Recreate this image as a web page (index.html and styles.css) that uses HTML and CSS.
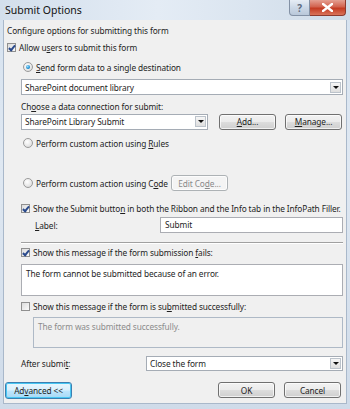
FILE: index.html
```html
<!DOCTYPE html>
<html lang="en">
<head>
  <meta charset="UTF-8">
  <title>Submit Options</title>
  <link rel="stylesheet" href="styles.css">
</head>
<body>
  <div class="window">
    <div class="titlebar">
      <span class="title">Submit Options</span>
      <div class="caption-btns">
        <span class="cap help">?</span>
        <span class="cap close">
          <svg width="11" height="9" viewBox="0 0 11 9"><path d="M1 1 L10 8 M10 1 L1 8" stroke="#fff" stroke-width="2.4" stroke-linecap="square"/></svg>
        </span>
      </div>
    </div>

    <div class="client">
      <div class="row intro"><span>Configure options for submitting this form</span></div>
      <div class="row allow"><span class="cb checked"></span><span>Allow u<u>s</u>ers to submit this form</span></div>

      <div class="indent">
        <div class="row radio-row send"><span class="rb on"></span><span><u>S</u>end form data to a single destination</span></div>
        <div class="select dest"><span class="val">SharePoint document library</span><span class="arrow"></span></div>

        <div class="row choose"><span>Ch<u>o</u>ose a data connection for submit:</span></div>
        <div class="conn">
          <div class="select conn-select"><span class="val">SharePoint Library Submit</span><span class="arrow"></span></div>
          <button class="btn"><u>A</u>dd...</button>
          <button class="btn"><u>M</u>anage...</button>
        </div>

        <div class="row radio-row rules"><span class="rb"></span><span>Perform custom action using <u>R</u>ules</span></div>
        <div class="row radio-row code">
          <span class="rb"></span><span class="code-text">Perform custom action using C<u>o</u>de</span>
          <button class="btn disabled">Edit Co<u>d</u>e...</button>
        </div>

        <div class="row show-btn"><span class="cb checked"></span><span>Show the Submit butto<u>n</u> in both the Ribbon and the Info tab in the InfoPath Filler.</span></div>
        <div class="label-row">
          <span class="lbl"><u>L</u>abel:</span>
          <div class="field">Submit</div>
        </div>

        <div class="separator"></div>

        <div class="row fails"><span class="cb checked"></span><span>Show this message if the form submission <u>f</u>ails:</span></div>
        <div class="textbox">The form cannot be submitted because of an error.</div>

        <div class="row success"><span class="cb"></span><span>Show this message if the form is su<u>b</u>mitted successfully:</span></div>
        <div class="textbox disabled">The form was submitted successfully.</div>

        <div class="after-row">
          <span class="lbl">After submi<u>t</u>:</span>
          <div class="select after-select"><span class="val">Close the form</span><span class="arrow"></span></div>
        </div>
      </div>

      <div class="footer">
        <button class="btn focus">Ad<u>v</u>anced &lt;&lt;</button>
        <div class="footer-right">
          <button class="btn">OK</button>
          <button class="btn">Cancel</button>
        </div>
      </div>
    </div>
  </div>
</body>
</html>
```

FILE: styles.css
```css
body {
  margin: 0;
  font-family: 'Noto Sans', 'Open Sans', sans-serif;
  font-size: 8.3px;
  letter-spacing: -0.1px;
  color: #1e1e1e;
  background: #c9d6e4;
}

.window {
  width: 350px;
  height: 409px;
  background: linear-gradient(to bottom, #d6e2ef 0%, #dfe8f2 40%, #cfdbe9 100%);
  display: flex;
  flex-direction: column;
  box-sizing: border-box;
}

.titlebar {
  height: 20px;
  display: flex;
  justify-content: space-between;
  align-items: flex-start;
  background: linear-gradient(to right, #d3dfec 0%, #e4ecf5 45%, #dbe5f0 70%, #cfdbe8 100%);
}

.title {
  font-size: 10.5px;
  letter-spacing: 0;
  color: #111;
  padding: 3px 0 0 5px;
}

.caption-btns {
  display: flex;
  margin-right: 4px;
}

.cap {
  height: 16px;
  display: flex;
  align-items: center;
  justify-content: center;
  box-sizing: border-box;
  border: 1px solid #8391a5;
  border-top: none;
}

.help {
  width: 21px;
  border-radius: 0 0 0 4px;
  background: linear-gradient(to bottom, #e6edf5 0%, #ccd8e6 50%, #b9c8da 100%);
  color: #5d6b80;
  font-size: 10px;
  font-weight: bold;
}

.close {
  width: 36px;
  border-left: none;
  border-color: #8d3a2e;
  border-radius: 0 0 4px 0;
  background: linear-gradient(to bottom, #e4a092 0%, #d2634f 45%, #c43b22 55%, #d9745b 100%);
}

.client {
  flex: 1;
  margin: 0 3px 5px 3px;
  background: #f0f0f0;
  border: 1px solid #a9b8ca;
  border-top: none;
  padding: 0 3px 0 3px;
  display: flex;
  flex-direction: column;
}

.row {
  height: 14px;
  display: flex;
  align-items: center;
  white-space: nowrap;
}

.intro { margin-top: 3px; }
.allow { margin-top: 3px; }

.indent {
  margin-left: 14px;
  display: flex;
  flex-direction: column;
}

.radio-row { padding-left: 2px; }
.send { margin-top: 6px; }

.cb {
  width: 9px;
  height: 9px;
  box-sizing: border-box;
  border: 1px solid #8f8f8f;
  background: linear-gradient(135deg, #dcdcdc 0%, #fafafa 100%);
  margin-right: 3px;
  position: relative;
  flex-shrink: 0;
}

.cb.checked::after {
  content: '';
  position: absolute;
  left: 2px;
  top: 0;
  width: 2px;
  height: 5px;
  border: solid #2a4a8c;
  border-width: 0 2px 2px 0;
  transform: rotate(40deg);
}

.rb {
  width: 10px;
  height: 10px;
  box-sizing: border-box;
  border-radius: 50%;
  border: 1px solid #9a9a9a;
  background: radial-gradient(circle at 40% 35%, #ffffff 0%, #e6e6e6 60%, #cfcfcf 100%);
  margin-right: 3px;
  position: relative;
  flex-shrink: 0;
}

.rb.on::after {
  content: '';
  position: absolute;
  left: 2px;
  top: 2px;
  width: 4px;
  height: 4px;
  border-radius: 50%;
  background: radial-gradient(circle at 40% 35%, #9fe0ff 0%, #1d8fd2 60%, #0b5e9e 100%);
}

.select {
  height: 16px;
  box-sizing: border-box;
  border: 1px solid #a5acb5;
  background: #fff;
  display: flex;
  align-items: center;
  justify-content: space-between;
  padding: 0 1px 0 3px;
}

.dest { margin-top: 5px; }

.arrow {
  width: 11px;
  height: 11px;
  box-sizing: border-box;
  border: 1px solid #bcc3cb;
  background: linear-gradient(to bottom, #f6f6f6, #dedede);
  position: relative;
}

.arrow::after {
  content: '';
  position: absolute;
  left: 2px;
  top: 3px;
  border-left: 3px solid transparent;
  border-right: 3px solid transparent;
  border-top: 3px solid #111;
}

.choose { margin-top: 4px; }

.conn {
  height: 17px;
  display: flex;
  align-items: center;
  gap: 9px;
}

.conn-select {
  width: 187px;
  margin-right: 2px;
}

.btn {
  font-family: inherit;
  font-size: inherit;
  letter-spacing: inherit;
  color: #1e1e1e;
  width: 57px;
  height: 16px;
  padding: 0;
  box-sizing: border-box;
  border: 1px solid #707070;
  border-radius: 3px;
  background: linear-gradient(to bottom, #f2f2f2 0%, #ebebeb 49%, #dddddd 51%, #cfcfcf 100%);
  box-shadow: inset 0 0 0 1px rgba(255, 255, 255, 0.7);
}

.btn.disabled {
  color: #8a8a8a;
  border-color: #adb2b5;
  background: #f4f4f4;
}

.btn.focus {
  width: 67px;
  height: 17px;
  border-color: #3c7fb1;
  box-shadow: inset 0 0 0 1px #48c7f3;
  background: linear-gradient(to bottom, #eaf6fd 0%, #d9f0fc 49%, #bee6fd 51%, #a7d9f5 100%);
}

.rules { margin-top: 6px; }

.code {
  margin-top: 25px;
  height: 16px;
}

.code-text { width: 135px; }

.show-btn { margin-top: 10px; }

.label-row {
  margin-top: 2px;
  height: 16px;
  display: flex;
  align-items: center;
}

.label-row .lbl {
  width: 125px;
  padding-left: 14px;
}

.field {
  flex: 1;
  height: 16px;
  box-sizing: border-box;
  border: 1px solid #abadb3;
  background: #fff;
  padding: 1px 4px;
}

.separator {
  margin-top: 9px;
  height: 1px;
  background: #a0a0a0;
  border-bottom: 1px solid #fff;
}

.fails { margin-top: 1px; }

.textbox {
  margin-top: 5px;
  height: 32px;
  box-sizing: border-box;
  border: 1px solid #abadb3;
  background: #fff;
  padding: 3px 4px;
}

.success { margin-top: 3px; }

.textbox.disabled {
  margin-top: 4px;
  margin-left: 12px;
  height: 31px;
  color: #8c8c8c;
  background: #f0f0f0;
  border-color: #aeb9c6;
}

.after-row {
  margin-top: 8px;
  height: 15px;
  display: flex;
  align-items: center;
}

.after-row .lbl {
  width: 125px;
}

.after-select {
  flex: 1;
  height: 15px;
}

.footer {
  margin-top: 11px;
  margin-left: -2px;
  display: flex;
  justify-content: space-between;
}

.footer-right {
  display: flex;
  gap: 9px;
  padding-right: 2px;
}
```
